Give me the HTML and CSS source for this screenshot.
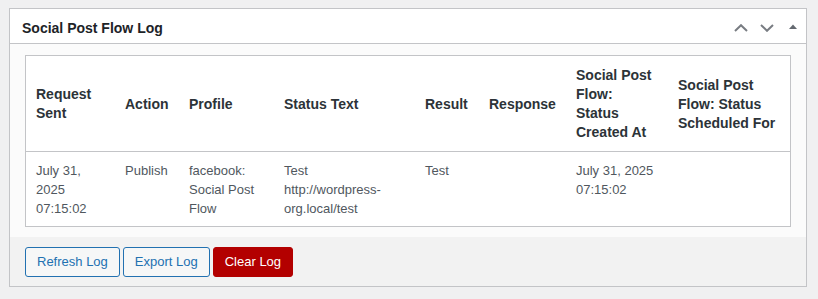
FILE: index.html
```html
<!DOCTYPE html>
<html lang="en">
<head>
<meta charset="utf-8">
<title>Social Post Flow Log</title>
<link rel="stylesheet" href="styles.css">
</head>
<body>
<div class="postbox">
  <div class="postbox-header">
    <h2 class="hndle">Social Post Flow Log</h2>
    <div class="handle-actions">
      <button class="handle-btn" type="button" aria-label="Move up">
        <svg width="14" height="8" viewBox="0 0 14 8"><polyline points="1,7 7,1.2 13,7" fill="none" stroke="#787c82" stroke-width="2"/></svg>
      </button>
      <button class="handle-btn" type="button" aria-label="Move down">
        <svg width="14" height="8" viewBox="0 0 14 8"><polyline points="1,1 7,6.8 13,1" fill="none" stroke="#787c82" stroke-width="2"/></svg>
      </button>
      <button class="handle-btn toggle" type="button" aria-label="Toggle panel">
        <svg width="8" height="6" viewBox="0 0 8 6"><polygon points="0,5 4,0.5 8,5" fill="#646970"/></svg>
      </button>
    </div>
  </div>
  <div class="inside">
    <table class="log-table">
      <thead>
        <tr>
          <th class="c1">Request Sent</th>
          <th class="c2">Action</th>
          <th class="c3">Profile</th>
          <th class="c4">Status Text</th>
          <th class="c5">Result</th>
          <th class="c6 nowrap">Response</th>
          <th class="c7">Social Post Flow: Status Created At</th>
          <th class="c8">Social Post Flow: Status Scheduled For</th>
        </tr>
      </thead>
      <tbody>
        <tr>
          <td>July 31, 2025 07:15:02</td>
          <td>Publish</td>
          <td>facebook: Social Post Flow</td>
          <td>Test http://wordpress-org.local/test</td>
          <td>Test</td>
          <td></td>
          <td>July 31, 2025 07:15:02</td>
          <td></td>
        </tr>
      </tbody>
    </table>
  </div>
  <div class="actions">
    <button class="button" type="button">Refresh Log</button>
    <button class="button" type="button">Export Log</button>
    <button class="button button-danger" type="button">Clear Log</button>
  </div>
</div>
</body>
</html>
```
FILE: styles.css
```css
* {
  box-sizing: border-box;
}

html, body {
  margin: 0;
  height: 100%;
}

body {
  background: #f0f0f1;
  padding: 8px 11px 0 9px;
  font-family: "Liberation Sans", Arial, sans-serif;
  color: #3c434a;
}

.postbox {
  border: 1px solid #c3c4c7;
  background: #fff;
  height: 279px;
  display: flex;
  flex-direction: column;
}

.postbox-header {
  display: flex;
  align-items: stretch;
  height: 35px;
  border-bottom: 1px solid #c3c4c7;
  background: #fff;
}

.hndle {
  flex: 1;
  margin: 0;
  padding: 9px 12px 5px;
  font-size: 14px;
  line-height: 20px;
  font-weight: 700;
  color: #1d2327;
}

.handle-actions {
  display: flex;
}

.handle-btn {
  width: 26px;
  padding: 3px 0 0;
  margin: 0;
  border: 0;
  background: transparent;
  display: flex;
  align-items: center;
  justify-content: center;
}

.handle-btn.toggle {
  padding-top: 1px;
}

.inside {
  background: #fbfbfb;
  padding: 11px 15px 10px;
}

.log-table {
  width: 766px;
  table-layout: fixed;
  border-collapse: separate;
  border-spacing: 0;
  border: 1px solid #c3c4c7;
  background: #fff;
}

.log-table th,
.log-table td {
  text-align: left;
}

.log-table th {
  padding: 10px 10px 9px;
  font-size: 14px;
  line-height: 19px;
  font-weight: 700;
  color: #2c3338;
  vertical-align: middle;
  border-bottom: 1px solid #c3c4c7;
}

.log-table td {
  padding: 9px 10px 8px;
  font-size: 13px;
  line-height: 19px;
  color: #50575e;
  vertical-align: top;
}

.nowrap {
  white-space: nowrap;
}

.c1 { width: 89px; }
.c2 { width: 64px; }
.c3 { width: 95px; }
.c4 { width: 141px; }
.c5 { width: 64px; }
.c6 { width: 87px; }
.c7 { width: 102px; }
.c8 { width: 122px; }

.actions {
  flex: 1;
  background: #f2f2f2;
  padding: 10px 15px 9px;
  display: flex;
  gap: 3px;
  align-items: flex-start;
}

.button {
  height: 30px;
  padding: 0 11px;
  font-family: "Liberation Sans", Arial, sans-serif;
  font-size: 13px;
  line-height: 28px;
  color: #2271b1;
  background: #f6f7f7;
  border: 1px solid #2271b1;
  border-radius: 3px;
  cursor: pointer;
}

.button-danger {
  background: #b30000;
  border-color: #b30000;
  color: #fff;
}
```
